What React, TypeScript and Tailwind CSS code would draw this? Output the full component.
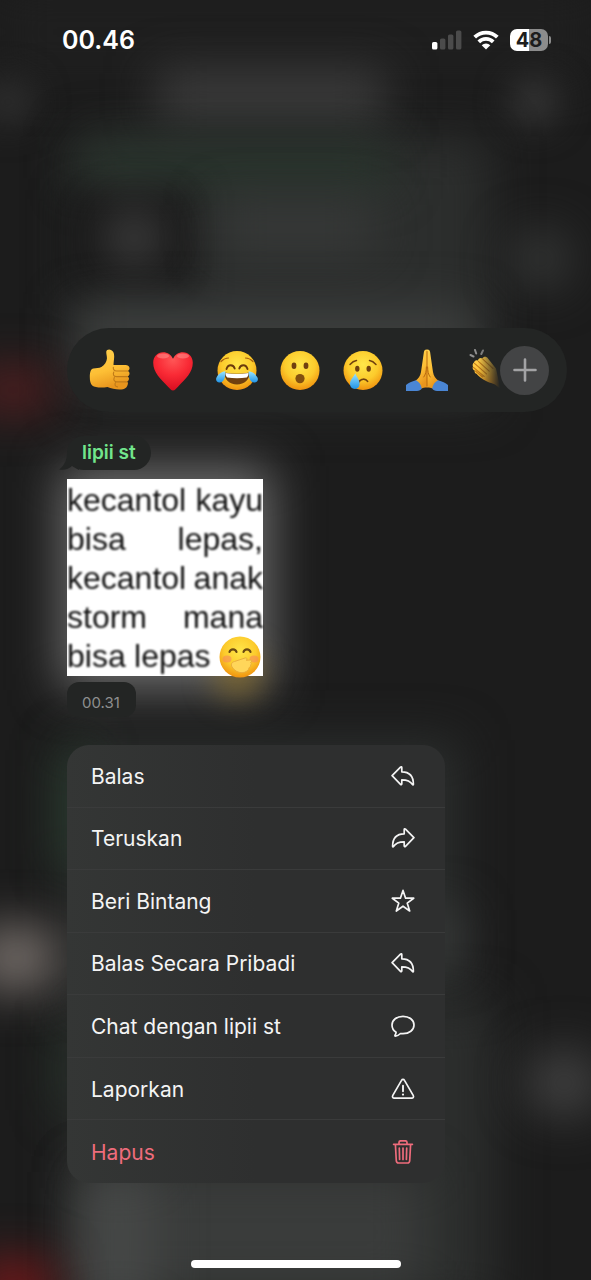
import type { ReactNode } from "react";

function Backdrop() {
  return (
    <div aria-hidden="true" className="pointer-events-none absolute inset-0 -z-10 overflow-hidden bg-[#1c1c1c]">
      {/* header */}
      <div className="absolute inset-x-0 -top-4 h-24 bg-[#1f1f1f] blur-xl" />
      <div className="absolute top-[78px] -left-5 h-12 w-14 rounded-full bg-[#2c2c2c] blur-lg" />
      <div className="absolute top-[76px] left-[508px] size-[52px] rounded-full bg-[#323232] blur-lg" />
      {/* upper message */}
      <div className="absolute top-[136px] left-[76px] h-[270px] w-[414px] bg-[#2c2e2d] blur-xl" />
      <div className="absolute top-[72px] left-[156px] h-12 w-[230px] bg-[#404040] blur-xl" />
      <div className="absolute top-[148px] left-[80px] h-9 w-[310px] bg-[#28372d] blur-xl" />
      <div className="absolute top-[190px] left-[64px] h-[104px] w-[132px] bg-[#191919] blur-lg" />
      <div className="absolute top-[210px] left-[106px] size-[56px] rounded-full bg-[#464646] blur-xl" />
      <div className="absolute top-[204px] left-[216px] h-12 w-[160px] bg-[#383a39] blur-xl" />
      <div className="absolute top-[308px] left-[76px] h-[60px] w-[400px] bg-[#3e403f] blur-xl" />
      <div className="absolute top-[230px] left-[512px] size-[58px] rounded-full bg-[#383a39] blur-xl" />
      <div className="absolute top-[370px] -left-6 h-10 w-[74px] bg-[#5a1e20] blur-xl" />
      {/* sticker glow */}
      <div className="absolute top-[466px] left-[60px] h-[224px] w-[212px] bg-[#6c6c6c] blur-xl" />
      <div className="absolute top-[652px] left-[216px] size-[44px] rounded-full bg-[#80682c] blur-lg" />
      {/* lower messages */}
      <div className="absolute top-[740px] left-[72px] h-[270px] w-[386px] bg-[#2c2f2e] blur-xl" />
      <div className="absolute top-[750px] left-[62px] h-[120px] w-6 bg-[#2b4633] blur-xl" />
      <div className="absolute top-[1030px] left-[62px] h-[80px] w-5 bg-[#2a4030] blur-xl" />
      <div className="absolute top-[1000px] left-[72px] h-[310px] w-[422px] bg-[#2c2e2d] blur-xl" />
      <div className="absolute top-[910px] left-[420px] h-[54px] w-10 bg-[#3c3e3d] blur-xl" />
      <div className="absolute top-[1172px] left-[84px] h-[120px] w-[340px] bg-[#3a3c3b] blur-xl" />
      <div className="absolute top-[1172px] left-[84px] h-[140px] w-[70px] bg-[#464847] blur-xl" />
      <div className="absolute top-[926px] -left-6 h-[64px] w-[80px] bg-[#736c68] blur-xl" />
      <div className="absolute top-[1050px] left-[526px] h-[66px] w-[76px] rounded-full bg-[#424242] blur-xl" />
      <div className="absolute top-[1260px] -left-6 h-14 w-[76px] bg-[#74181a] blur-xl" />
    </div>
  );
}

function StatusBar() {
  return (
    <header className="flex h-20 items-center justify-between pr-10 pl-[62px] text-white">
      <time className="text-[25px] leading-8 font-semibold">00.46</time>
      <div className="flex items-center gap-[11px]">
        <svg className="h-5 w-[30px]" viewBox="0 0 30 20" aria-label="Sinyal">
          <rect x="0" y="12" width="5.4" height="7.6" rx="1.6" fill="#fff" />
          <rect x="8" y="8.4" width="5.4" height="11.2" rx="1.6" fill="#4b4b4b" />
          <rect x="16" y="4.4" width="5.4" height="15.2" rx="1.6" fill="#4b4b4b" />
          <rect x="24" y="0.4" width="5.4" height="19.2" rx="1.6" fill="#4b4b4b" />
        </svg>
        <svg className="h-5 w-[26px]" viewBox="0 0 26 20" aria-label="Wi-Fi">
          <g fill="none" stroke="#fff" strokeWidth="3.8">
            <path d="M1.7 7.2a16 16 0 0 1 22.6 0" />
            <path d="M5.800 11.900a10.200 10.200 0 0 1 14.400 0" />
          </g>
          <path d="M13 19.600 8.700 15.300a6.100 6.100 0 0 1 8.600 0Z" fill="#fff" />
        </svg>
        <div className="flex items-center gap-px">
          <div className="flex h-[22px] w-[38px] items-center justify-center rounded-[7px] bg-linear-to-r from-white from-50% to-[#8c8c8c] to-50%">
            <span className="text-[20px] leading-5 font-bold text-[#1d1d1d]">48</span>
          </div>
          <div className="h-2 w-0.5 rounded-r-full bg-[#8c8c8c]" />
        </div>
      </div>
    </header>
  );
}

function EmojiDefs() {
  return (
    <svg className="absolute size-0" aria-hidden="true">
      <defs>
        <radialGradient id="face" cx="0.5" cy="0.35" r="0.65">
          <stop offset="0" stopColor="#ffe64a" />
          <stop offset="0.6" stopColor="#fccb2c" />
          <stop offset="1" stopColor="#f0930f" />
        </radialGradient>
        <linearGradient id="skin" x1="0" y1="0" x2="0.3" y2="1">
          <stop offset="0" stopColor="#ffd250" />
          <stop offset="0.6" stopColor="#fdbf35" />
          <stop offset="1" stopColor="#e8951d" />
        </linearGradient>
        <radialGradient id="heart" cx="0.5" cy="0.2" r="0.8">
          <stop offset="0" stopColor="#ff5656" />
          <stop offset="0.5" stopColor="#f92a35" />
          <stop offset="1" stopColor="#d80d20" />
        </radialGradient>
        <linearGradient id="tear" x1="0" y1="0" x2="0" y2="1">
          <stop offset="0" stopColor="#9be4ff" />
          <stop offset="1" stopColor="#1f93e6" />
        </linearGradient>
      </defs>
    </svg>
  );
}

function Emoji({ children }: { children: ReactNode }) {
  return (
    <svg viewBox="0 0 42 42" className="size-[42px]" aria-hidden="true">
      {children}
    </svg>
  );
}

const reactions: { label: string; art: ReactNode }[] = [
  {
    label: "Suka",
    art: (
      <Emoji>
        <path
          d="M17.300 2.600C17.600-.4 22.500-.3 24.300 3c1.800 3.600.3 8.500.2 13h11.800c3 0 4.400 1.700 4.200 3.500-.1 1.200-.8 2-1.600 2.400 1.200.6 1.800 1.700 1.600 3.100-.2 1.200-.8 2-1.800 2.400 1 .6 1.400 1.700 1.200 2.900-.2 1.200-.9 1.900-1.800 2.300.8.700 1 1.600.7 2.700-.5 2.600-2 4.500-4.700 4.900-5 .7-11.100-.2-15.600-2.200C12 39.200 6 38.500 3.200 36.400 1.500 35 .8 31.600.8 28c0-5 1-8 3.600-8.500 2.800-.5 5.600-.1 8-1.400C15.800 16 17.600 13 17.900 9.800c.2-2.600-.8-5-.6-7.200Z"
          fill="url(#skin)"
        />
        <path
          d="M38.500 22H27.500c-2.400 0-3.400-1.600-3.200-3.600M38.500 27.600H27.300c-2.700 0-3.600-2.200-2.500-4.500M37.500 32.900H28c-2.800 0-3.800-2.200-2.700-4.500M28.500 37.900c-2.700-.5-3.100-2.700-1.800-4.600"
          fill="none"
          stroke="#c07a18"
          strokeWidth="1.100"
          strokeLinecap="round"
        />
      </Emoji>
    ),
  },
  {
    label: "Cinta",
    art: (
      <Emoji>
        <path
          d="M21 41.500c-1.800 0-3.300-2.100-5-3.800C8.500 30.200 1.200 23.500 1.200 13.800 1.200 7.600 5.500 3.200 11 3.200c4.600 0 8.200 2.500 10 6.600 1.800-4.100 5.400-6.600 10-6.600 5.500 0 9.800 4.400 9.800 10.600 0 9.700-7.300 16.400-14.800 23.900-1.700 1.700-3.200 3.800-5 3.800Z"
          fill="url(#heart)"
        />
        <ellipse cx="11" cy="7" rx="6" ry="2.600" fill="#ff9a95" opacity="0.5" />
        <ellipse cx="31" cy="7" rx="6" ry="2.600" fill="#ff9a95" opacity="0.5" />
      </Emoji>
    ),
  },
  {
    label: "Tertawa",
    art: (
      <Emoji>
        <circle cx="21" cy="21.500" r="19.500" fill="url(#face)" />
        <path d="M5 12.500c2-2 4.500-3.500 7.500-3.500M37 12.500C35 10.500 32.500 9 29.500 9" fill="none" stroke="#a6600e" strokeWidth="1.200" strokeLinecap="round" />
        <path d="M10.500 20c.8-2.600 2.400-3.800 4.200-3.800s3.400 1.200 4 3.400M23.300 19.600c.6-2.200 2.200-3.400 4-3.400s3.400 1.200 4.200 3.800" fill="none" stroke="#6b3a0c" strokeWidth="1.900" strokeLinecap="round" />
        <path d="M8.500 23.500c8 1.600 17 1.600 25 0 .6 6.500-5 12-12.500 12s-13.100-5.500-12.500-12Z" fill="#70400f" />
        <path d="M9.500 24c7.500 1.300 15.500 1.300 23 0 0 2.300-.7 3.600-1.800 4.600-6 1-13.400 1-19.400 0C10.200 27.600 9.500 26.300 9.500 24Z" fill="#fff" />
        <path d="M9.300 22.300c.4 6-1.300 11-5.500 11.300C.9 33.800-.6 31.300.4 28.800c1.200-2.800 4.800-6.300 8.900-6.500ZM32.700 22.300c-.4 6 1.300 11 5.500 11.300 2.900.2 4.400-2.300 3.400-4.800-1.200-2.800-4.800-6.300-8.900-6.500Z" fill="url(#tear)" />
      </Emoji>
    ),
  },
  {
    label: "Terkejut",
    art: (
      <Emoji>
        <circle cx="21" cy="21.500" r="19.500" fill="url(#face)" />
        <ellipse cx="15" cy="16.800" rx="2.400" ry="3.200" fill="#70400f" />
        <ellipse cx="27" cy="16.800" rx="2.400" ry="3.200" fill="#70400f" />
        <ellipse cx="21" cy="29.600" rx="4.600" ry="4.700" fill="#83500f" />
      </Emoji>
    ),
  },
  {
    label: "Sedih",
    art: (
      <Emoji>
        <circle cx="21" cy="21.500" r="19.500" fill="url(#face)" />
        <path d="M8 15.500c2-2.300 4-3.600 6.500-4M34 15.500c-2-2.300-4-3.600-6.500-4" fill="none" stroke="#70400f" strokeWidth="1.500" strokeLinecap="round" />
        <ellipse cx="15.300" cy="19.800" rx="2.200" ry="3" fill="#70400f" />
        <ellipse cx="26.700" cy="19.800" rx="2.200" ry="3" fill="#70400f" />
        <path d="M16.800 33c2-3.600 6.800-3.600 8.800-.6" fill="none" stroke="#70400f" strokeWidth="1.700" strokeLinecap="round" />
        <path d="M13.200 24.300c1.200 3.500 4.400 6.500 4.400 10.500 0 3-2 5.200-4.800 5.200S8 37.800 8 34.800c0-4 4-7 5.200-10.500Z" fill="url(#tear)" />
      </Emoji>
    ),
  },
  {
    label: "Terima kasih",
    art: (
      <Emoji>
        <path d="M21 1v37.500c-1.700-.1-4 .5-6.500 1L9.300 32c3.400-2.600 5-5 5.700-9L17.900 3c.3-2.300 2.900-3 3.100-2Z" fill="url(#skin)" />
        <path d="M21 1v37.500c1.700-.1 4 .5 6.500 1l5.200-7.500c-3.400-2.600-5-5-5.700-9L24.100 3c-.3-2.300-2.900-3-3.100-2Z" fill="url(#skin)" />
        <path d="M21 2.500V37M17.800 28c2-2.500 2.500-6 2.600-10M24.200 28c-2-2.500-2.500-6-2.600-10" fill="none" stroke="#b8690f" strokeWidth="1" strokeLinecap="round" />
        <path d="M0 36c2.500-2.500 5.700-3.600 10-4.800 3 1.500 5.300 4.600 5.800 8.300-.7 1.400-2.600 2.500-4.800 2.500H0ZM42 36c-2.500-2.500-5.700-3.600-10-4.800-3 1.500-5.300 4.600-5.800 8.300.7 1.400 2.600 2.500 4.800 2.500h11Z" fill="#4a86d4" />
      </Emoji>
    ),
  },
  {
    label: "Tepuk tangan",
    art: (
      <Emoji>
        <path d="m1.500 6 3 1.500M6 1l1.200 3.500M14 1.500 12.300 5" stroke="#909090" strokeWidth="2" strokeLinecap="round" />
        <path d="M5 13.500c.8-2.200 2.600-2.600 4-1.700.2-2.500 2.600-3.500 4.400-2.200 1-2.300 4-2.400 5.400-.3L27 19.500 31.500 40l-5.500-4.500c-2.500-1.300-5-1.600-8-3C12.500 30 9.300 27 7.500 24.800c-1.400-.3-2.400-1.800-1.700-3.200-1.800-.7-2.700-2.300-1.800-4-.6-1.200-.4-3 1-4.100Z" fill="url(#skin)" />
        <path d="m5.500 14.300 12 10.500M9.400 12.300l10.800 9.800M13.800 10.200 24 19.500M4.500 18.300l10.700 9.200M6.500 22l7 6" fill="none" stroke="#c07a18" strokeWidth="1.100" strokeLinecap="round" />
      </Emoji>
    ),
  },
];

function ReactionBar() {
  return (
    <section aria-label="Reaksi" className="flex h-[84px] w-full items-center rounded-full bg-[#232524] pr-[18px] pl-[22px]">
      <div className="min-w-0 flex-1 overflow-hidden mask-r-from-[calc(100%-22px)] mask-r-to-100%">
        <div className="flex w-[422px] justify-between">
          {reactions.map((r) => (
            <button key={r.label} type="button" aria-label={r.label} className="shrink-0">
              {r.art}
            </button>
          ))}
        </div>
      </div>
      <button type="button" aria-label="Reaksi lainnya" className="flex size-[49px] shrink-0 items-center justify-center rounded-full bg-[#434445]">
        <svg viewBox="0 0 24 24" className="size-6" fill="none" stroke="#a3a3a5" strokeWidth="2.600" strokeLinecap="round">
          <path d="M12 1.500v21M1.500 12h21" />
        </svg>
      </button>
    </section>
  );
}

const stickerLines = [
  ["kecantol", "kayu"],
  ["bisa", "lepas,"],
  ["kecantol", "anak"],
  ["storm", "mana"],
];

function Sticker() {
  return (
    <div className="flex h-[197px] w-[196px] flex-col bg-white pt-0.5 font-['Liberation_Sans',Arial,sans-serif] text-[32px] leading-[39px] text-[#101010]">
      {stickerLines.map((words, i) => (
        <p key={i} className="flex justify-between blur-[1px]">
          {words.map((w) => (
            <span key={w}>{w}</span>
          ))}
        </p>
      ))}
      <p className="flex h-[39px] items-center justify-between">
        <span className="blur-[1px]">bisa</span>
        <span className="blur-[1px]">lepas</span>
        <svg viewBox="0 0 42 42" className="mr-0.5 size-[42px] shrink-0" role="img" aria-label="Wajah menahan tawa">
          <circle cx="21" cy="21" r="20.500" fill="url(#face)" />
          <path d="M10.500 16c1-3.600 6-3.600 7 0M24.500 16c1-3.600 6-3.600 7 0" fill="none" stroke="#6b4a12" strokeWidth="2.200" strokeLinecap="round" />
          <ellipse cx="8" cy="23" rx="4.500" ry="3.500" fill="#f78a5a" opacity="0.6" />
          <ellipse cx="35" cy="23" rx="4.500" ry="3.500" fill="#f78a5a" opacity="0.6" />
          <path d="M13 31c-1.500-3 0-5 2.500-5.500l10.500-3.500c2-.6 2.800 1.400 1.200 2.300l4-.3c2 0 2 2 .3 2.600 1.500.6 1.200 2-.2 2.500.8.800.3 2-1 2.200C29 38 18 39 13 31Z" fill="#ffd65a" stroke="#e8a93a" strokeWidth="0.900" />
        </svg>
      </p>
    </div>
  );
}

function Icon({ children }: { children: ReactNode }) {
  return (
    <svg viewBox="0 0 24 24" className="size-6" fill="none" stroke="currentColor" strokeWidth="1.700" strokeLinejoin="round" strokeLinecap="round" aria-hidden="true">
      {children}
    </svg>
  );
}

const replyPath = "M1.100 11.700 9.500 3.100c.6-.6 1.300-.4 1.300.5v4.200c7.400 0 11.600 4.200 11.600 12.500 0 .6-.6.7-.9.2-2.200-3.700-5-4.700-10.700-4.700v4c0 .9-.7 1.100-1.300.5Z";

const ReplyIcon = (
  <Icon>
    <path d={replyPath} />
  </Icon>
);

const menu: { label: string; icon: ReactNode; danger?: boolean }[] = [
  { label: "Balas", icon: ReplyIcon },
  {
    label: "Teruskan",
    icon: (
      <Icon>
        <path d={replyPath} transform="matrix(-1 0 0 1 24 0)" />
      </Icon>
    ),
  },
  {
    label: "Beri Bintang",
    icon: (
      <Icon>
        <path d="m12 1.400 2.600 7.800h8.100l-6.500 4.900 2.500 7.900L12 17.200 5.300 22l2.500-7.900-6.500-4.900h8.100Z" />
      </Icon>
    ),
  },
  { label: "Balas Secara Pribadi", icon: ReplyIcon },
  {
    label: "Chat dengan lipii st",
    icon: (
      <Icon>
        <path d="M12 2.300c6.200 0 11 3.700 11 8.700s-4.800 8.700-11 8.700c-.9 0-1.700-.1-2.500-.2-1.400 1.300-3.300 2.400-5.100 2.600-.5 0-.6-.4-.4-.8.600-.9 1-1.800 1.100-3C2.600 16.800 1 14.100 1 11c0-5 4.800-8.700 11-8.700Z" />
      </Icon>
    ),
  },
  {
    label: "Laporkan",
    icon: (
      <Icon>
        <path d="M10.500 3.300c.7-1.300 2.300-1.300 3 0l8.700 15.100c.8 1.400 0 2.800-1.500 2.800H3.300c-1.500 0-2.300-1.400-1.500-2.800Z" />
        <path d="M12 8.700v5.500" strokeWidth="1.900" />
        <path d="M12 17.500v.1" strokeWidth="2.200" />
      </Icon>
    ),
  },
  {
    label: "Hapus",
    danger: true,
    icon: (
      <Icon>
        <path d="M2.600 4.300h18.800M8 4.200V2.500C8 1.400 8.700.8 9.700.8h4.600c1 0 1.700.6 1.700 1.700v1.700M4.400 4.500l.9 16.200c.1 1.500.9 2.300 2.300 2.300h8.800c1.400 0 2.200-.8 2.300-2.300l.9-16.200M12 8v11.500M8.300 8l.3 11.500M15.700 8l-.3 11.500" />
      </Icon>
    ),
  },
];

function ContextMenu() {
  return (
    <ul className="grid h-[438px] w-[378px] max-w-full auto-rows-fr divide-y divide-[#3a3b3b] overflow-hidden rounded-[22px] bg-linear-to-r from-[#343635] to-[#2e2f2f] to-50%">
      {menu.map((item) => (
        <li key={item.label} className="flex">
          <button
            type="button"
            className={`flex flex-1 items-center justify-between pr-[30px] pl-6 text-[21px] leading-7 ${item.danger ? "text-[#ee6c7c]" : "text-[#f4f4f4]"}`}
          >
            <span className="pt-0.5">{item.label}</span>
            {item.icon}
          </button>
        </li>
      ))}
    </ul>
  );
}

export default function App() {
  return (
    <div className="relative isolate flex min-h-screen flex-col overflow-hidden font-['Inter','Noto_Sans',sans-serif]">
      <Backdrop />
      <EmojiDefs />
      <StatusBar />
      <main className="flex flex-1 flex-col items-start pt-[248px] pr-6 pl-[67px]">
        <ReactionBar />
        <div className="relative mt-6 flex h-[34px] items-center rounded-[17px] bg-[#232524] px-[15px]">
          <svg viewBox="0 0 20 18" className="absolute bottom-0 -left-2 h-[18px] w-5" fill="#232524" aria-hidden="true">
            <path d="M8 0c0 8-2.500 13.500-8 17.500C5.500 18.500 10 17 13 14l7 4V0Z" />
          </svg>
          <span className="relative text-[19px] leading-6 font-semibold text-[#72e58c]">lipii st</span>
        </div>
        <div className="mt-[9px]">
          <Sticker />
        </div>
        <div className="mt-1.5 flex h-[35px] items-center rounded-xl bg-[#232524] pt-1.5 pr-4 pl-[15px]">
          <time className="text-[15px] leading-5 text-[#8e8f8f]">00.31</time>
        </div>
        <nav aria-label="Menu pesan" className="mt-7 max-w-full">
          <ContextMenu />
        </nav>
      </main>
      <footer className="flex justify-center pb-3">
        <div className="h-2 w-[210px] rounded-full bg-white" />
      </footer>
    </div>
  );
}
